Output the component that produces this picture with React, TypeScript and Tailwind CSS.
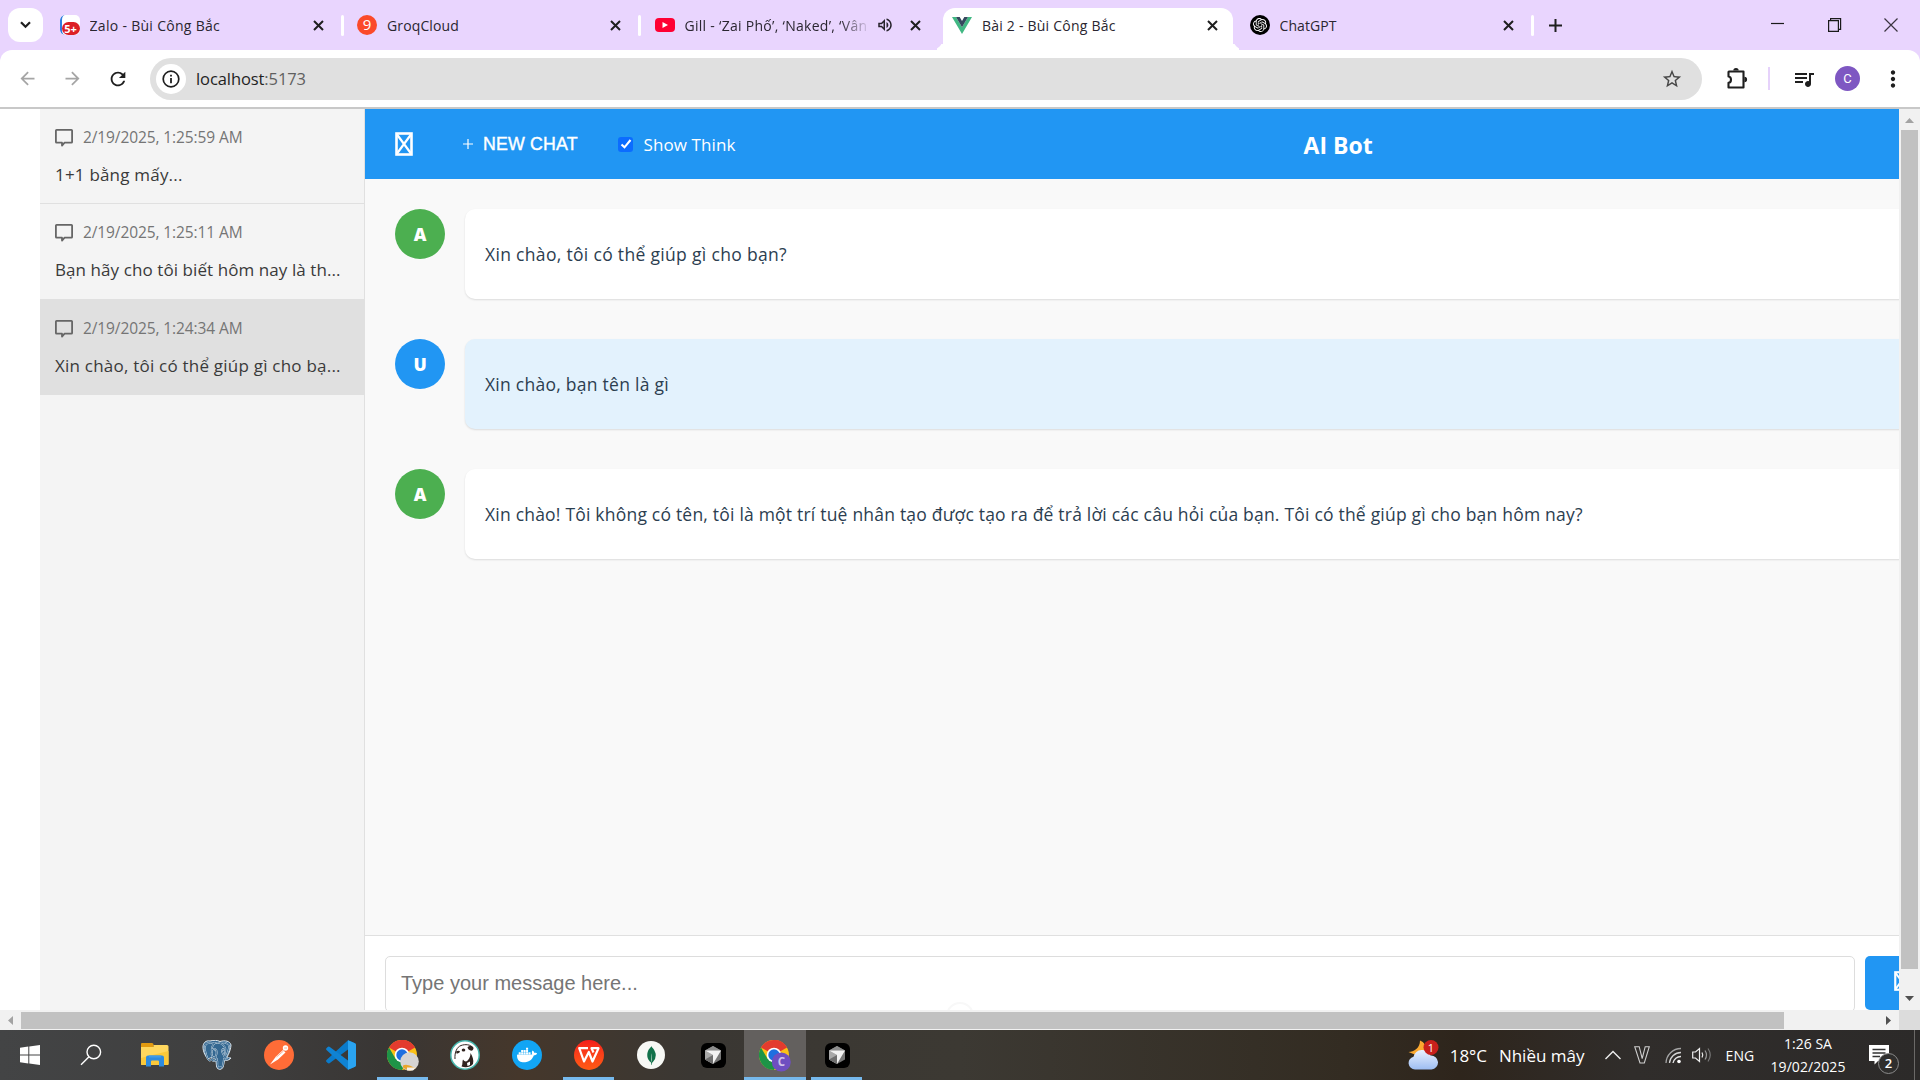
import type { ReactNode } from "react";
import {
  MdArrowBack,
  MdArrowForward,
  MdRefresh,
  MdStarBorder,
  MdQueueMusic,
  MdMoreVert,
  MdOutlineVolumeUp,
} from "react-icons/md";
import { SiOpenai, SiPostgresql, SiDocker, SiMongodb } from "react-icons/si";

/* ---------- Tab strip ---------- */

function ZaloFavicon() {
  return (
    <span className="relative block size-5 overflow-hidden rounded-[5px] bg-white">
      <span className="absolute inset-y-0 left-0 w-2.5 rounded-l-[5px] border-l-2 border-[#2f7de1]" />
      <span className="absolute right-0 bottom-0 flex h-[13px] w-[18px] items-center justify-center rounded-full bg-[#dc2026] text-[11px] leading-none font-bold text-white">
        5+
      </span>
    </span>
  );
}

function GroqFavicon() {
  return (
    <span className="flex size-5 items-center justify-center rounded-full bg-[#fb4a29] pb-px text-[15px] leading-none text-white">
      9
    </span>
  );
}

function YoutubeFavicon() {
  return (
    <span className="flex h-3.5 w-5 items-center justify-center rounded-[4px] bg-[#ff0033]">
      <svg viewBox="0 0 6 6" className="size-1.5">
        <path d="M0.5 0L6 3L0.5 6Z" fill="#fff" />
      </svg>
    </span>
  );
}

function VueFavicon() {
  return (
    <svg viewBox="0 0 20 17" className="h-[17px] w-5">
      <path d="M0 0H4L10 10.3L16 0H20L10 17Z" fill="#41b883" />
      <path d="M4 0H7.7L10 4L12.3 0H16L10 10.3Z" fill="#35495e" />
    </svg>
  );
}

function OpenAiFavicon() {
  return (
    <span className="flex size-5 items-center justify-center rounded-full bg-black">
      <SiOpenai className="size-3.5 text-white" />
    </span>
  );
}

function CloseIcon() {
  return (
    <svg viewBox="0 0 11 11" className="relative size-[11px] shrink-0" stroke="#1f1f1f" strokeWidth="2">
      <path d="M1 1L10 10M10 1L1 10" />
    </svg>
  );
}

type TabProps = {
  icon: ReactNode;
  title: ReactNode;
  active?: boolean;
  audio?: boolean;
  separator?: boolean;
};

function Tab({ icon, title, active, audio, separator }: TabProps) {
  return (
    <div className="relative flex h-[42px] w-[297.5px] shrink-0 items-center pb-[8px]">
      {active && (
        <div className="absolute inset-y-0 left-[4px] w-[290px] rounded-t-xl bg-white">
          <span className="absolute bottom-0 -left-3 size-3 rounded-br-xl bg-[#e9d5fe] shadow-[6px_6px_0_0_#fff]" />
          <span className="absolute -right-3 bottom-0 size-3 rounded-bl-xl bg-[#e9d5fe] shadow-[-6px_6px_0_0_#fff]" />
        </div>
      )}
      <span className="relative ml-[13.5px] flex w-5 justify-center">{icon}</span>
      <span
        className={
          audio
            ? "relative ml-2.5 w-[185px] overflow-hidden text-[14px] whitespace-nowrap text-[#2a2630] [mask-image:linear-gradient(to_right,#000_155px,transparent_186px)]"
            : "relative ml-2.5 w-[225px] overflow-hidden text-[14px] whitespace-nowrap text-[#2a2630]"
        }
      >
        {title}
      </span>
      {audio && <MdOutlineVolumeUp className="relative mr-[16px] ml-1.5 size-[18px] shrink-0 text-[#26222b]" />}
      <CloseIcon />
      {separator && <span className="ml-[17px] h-[21px] w-[3px] rounded-full bg-white" />}
    </div>
  );
}

function TabStrip() {
  return (
    <div className="flex h-[50px] shrink-0 bg-[#e9d5fe] pt-2">
      <div className="ml-2 flex h-[34px] w-[35px] shrink-0 items-center justify-center rounded-xl bg-white">
        <svg viewBox="0 0 11 8" className="h-2 w-[11px]" fill="none" stroke="#1f1f1f" strokeWidth="2.2">
          <path d="M1 1.2L5.5 5.8L10 1.2" />
        </svg>
      </div>
      <div className="ml-[3px] flex">
        <Tab icon={<ZaloFavicon />} title={<span className="tracking-[0.3px]">Zalo - Bùi Công Bắc</span>} separator />
        <Tab icon={<GroqFavicon />} title={<span className="tracking-[0.13px]">GroqCloud</span>} separator />
        <Tab
          icon={<YoutubeFavicon />}
          title={<span className="tracking-[0.28px]">Gill - ‘Zai Phố’, ‘Naked’, ‘Vân</span>}
          audio
        />
        <Tab icon={<VueFavicon />} title={<span className="tracking-[0.22px]">Bài 2 - Bùi Công Bắc</span>} active />
        <Tab icon={<OpenAiFavicon />} title={<span className="tracking-[0.07px]">ChatGPT</span>} separator />
      </div>
      <svg viewBox="0 0 13 13" className="mt-[10.5px] ml-[15.500px] size-[13px] shrink-0" stroke="#1f1f1f" strokeWidth="2">
        <path d="M6.500 0V13M0 6.500H13" />
      </svg>
      <div className="mt-[9px] ml-auto flex items-center gap-[42.500px] pr-[22px] pb-[18px]">
        <svg viewBox="0 0 14 14" className="size-3.5">
          <path d="M0 5.5H13" stroke="#1a1a1a" strokeWidth="1.2" />
        </svg>
        <svg viewBox="0 0 14 14" className="size-3.5" fill="none" stroke="#1a1a1a" strokeWidth="1.2">
          <path d="M0.6 2.6H10.4V13.4H0.6ZM2.6 2.6V0.6H12.6V11.4H10.4" />
        </svg>
        <svg viewBox="0 0 14 14" className="size-3.5" fill="none" stroke="#3a3440" strokeWidth="1.2">
          <path d="M0.5 0.5L13.5 13.5M13.5 0.5L0.5 13.5" />
        </svg>
      </div>
    </div>
  );
}

/* ---------- Toolbar ---------- */

function PuzzleIcon() {
  return (
    <svg viewBox="0 0 22 24" className="ml-[24px] h-6 w-[22px]">
      <path
        d="M3 4.500H17.500V20.500H2.500V15.800C5.800 15.500 5.800 9.800 2.500 9.500V5Z"
        fill="none"
        stroke="#1f1f1f"
        strokeWidth="2.100"
        strokeLinejoin="round"
      />
      <path d="M7.300 3.600A2.700 2.700 0 0 1 12.700 3.600ZM18.400 9.800A2.700 2.700 0 0 1 18.400 15.200Z" fill="#1f1f1f" />
    </svg>
  );
}

function Toolbar() {
  return (
    <div className="shrink-0 bg-[#e9d5fe]">
      <div className="flex h-[57px] items-center rounded-t-xl bg-white">
        <MdArrowBack className="ml-[17px] size-[21px] text-[#a5a5a5]" />
        <MdArrowForward className="ml-6 size-[21px] text-[#a5a5a5]" />
        <MdRefresh className="ml-6 size-[22px] text-[#1f1f1f]" />
        <div className="ml-[21px] flex h-[42px] w-[1552px] items-center rounded-full bg-[#e0e0e0] pl-1.5">
          <span className="flex size-[30px] items-center justify-center rounded-full bg-white">
            <svg viewBox="0 0 18 18" className="size-[18px]" fill="none" stroke="#1f1f1f">
              <circle cx="9" cy="9" r="7.8" strokeWidth="1.7" />
              <path d="M9 8V13.2M9 4.8V6.6" strokeWidth="1.8" />
            </svg>
          </span>
          <span className="mt-0.5 ml-[10px] text-[16.5px] tracking-[-0.09px] text-[#1f1f1f]">
            localhost<span className="text-[#5f5f5f]">:5173</span>
          </span>
          <MdStarBorder className="mr-[19px] ml-auto size-[22px] text-[#474747]" />
        </div>
        <PuzzleIcon />
        <span className="ml-[20px] h-[23px] w-[2px] bg-[#e6d2fb]" />
        <MdQueueMusic className="ml-[22px] size-6 text-[#1f1f1f]" />
        <span className="ml-[19px] flex size-[25px] items-center justify-center rounded-full bg-[#7e57c2] font-[Roboto] text-[13px] text-white">
          C
        </span>
        <MdMoreVert className="ml-[20px] size-[26px] text-[#1f1f1f]" />
      </div>
    </div>
  );
}

/* ---------- Chat application ---------- */

function MissingGlyph({ className }: { className: string }) {
  return (
    <svg viewBox="0 0 18 24" className={className} fill="none" stroke="#fff">
      <rect x="1.500" y="1.500" width="15" height="21" strokeWidth="2.600" />
      <path d="M2 2.500L16 21.500M16 2.500L2 21.500" strokeWidth="2.200" />
    </svg>
  );
}

function CommentIcon() {
  return (
    <svg viewBox="0 0 18 18" className="size-[18px]" fill="none" stroke="#666" strokeWidth="1.800" strokeLinejoin="round">
      <path d="M1.6 0.9H16.4Q17.1 0.9 17.1 1.6V13Q17.1 13.7 16.4 13.7H9.6L7 16.6V13.7H1.6Q0.9 13.7 0.9 13V1.6Q0.9 0.9 1.6 0.9Z" />
    </svg>
  );
}

type HistoryProps = { date: string; title: ReactNode; className: string };

function HistoryItem({ date, title, className }: HistoryProps) {
  return (
    <div className={className}>
      <div className="flex h-[22px] items-center">
        <CommentIcon />
        <span className="ml-2.5 text-[15.5px] tracking-[-0.1px] text-[#757575]">{date}</span>
      </div>
      <div className="mt-[12px] h-[28px] text-[17px] leading-[28px] whitespace-nowrap text-[#3a3a3a]">{title}</div>
    </div>
  );
}

function Sidebar() {
  return (
    <div className="ml-10 w-[325px] shrink-0 border-r border-[#e0e0e0] bg-[#f4f4f4]">
      <HistoryItem
        className="h-[95px] border-b border-[#e0e0e0] pt-[18px] pl-[15px]"
        date="2/19/2025, 1:25:59 AM"
        title={<span className="tracking-[0.2px]">1+1 bằng mấy...</span>}
      />
      <HistoryItem
        className="h-[95px] pt-[18px] pl-[15px]"
        date="2/19/2025, 1:25:11 AM"
        title={<span className="tracking-[0.08px]">Bạn hãy cho tôi biết hôm nay là th...</span>}
      />
      <HistoryItem
        className="h-[96px] bg-[#e0e0e0] pt-[19px] pl-[15px]"
        date="2/19/2025, 1:24:34 AM"
        title={<span className="tracking-[0.22px]">Xin chào, tôi có thể giúp gì cho bạ...</span>}
      />
    </div>
  );
}

type MessageProps = { user?: boolean; children: ReactNode };

function Message({ user, children }: MessageProps) {
  return (
    <div className="mb-10 flex gap-5">
      <span
        className={
          user
            ? "flex size-[50px] shrink-0 items-center justify-center rounded-full bg-[#2196f3] pt-px text-[17.5px] font-extrabold text-white"
            : "flex size-[50px] shrink-0 items-center justify-center rounded-full bg-[#4caf50] pt-px text-[17.5px] font-extrabold text-white"
        }
      >
        {user ? "U" : "A"}
      </span>
      <div
        className={
          user
            ? "flex h-[90px] flex-1 items-center rounded-[10px] bg-[#e3f2fd] px-5 text-[17.5px] whitespace-nowrap text-[#2c3e50] shadow-[0_1px_2px_rgba(0,0,0,0.12)]"
            : "flex h-[90px] flex-1 items-center rounded-[10px] bg-white px-5 text-[17.5px] whitespace-nowrap text-[#2c3e50] shadow-[0_1px_2px_rgba(0,0,0,0.12)]"
        }
      >
        {children}
      </div>
    </div>
  );
}

function ChatHeader() {
  return (
    <div className="flex h-[70px] shrink-0 items-center bg-[#2196f3] text-white">
      <MissingGlyph className="ml-[30px] h-6 w-[18px]" />
      <svg viewBox="0 0 10 10" className="ml-[50px] size-2.5">
        <path d="M5 0V10M0 5H10" stroke="#fff" strokeWidth="1.2" />
      </svg>
      <span className="ml-[10px] w-[97px] font-['Liberation_Sans'] text-[17.8px] tracking-[0.15px] whitespace-nowrap [-webkit-text-stroke:0.4px_#fff]">
        NEW CHAT
      </span>
      <span className="ml-[38px] flex size-[15px] items-center justify-center rounded-[3px] bg-[#0b6cff]">
        <svg viewBox="0 0 12 12" className="size-3" fill="none" stroke="#fff" strokeWidth="2.1">
          <path d="M1.5 6.5L4.5 9.3L10.5 2" />
        </svg>
      </span>
      <span className="mt-0.5 ml-[10.500px] text-[17px] tracking-[0.1px]">Show Think</span>
      <span className="mt-0.5 ml-[568px] text-[23px] font-bold">AI Bot</span>
    </div>
  );
}

function Composer() {
  return (
    <div className="flex h-[75px] shrink-0 border-t border-[#e0e0e0] bg-white pt-5 pl-5">
      <div className="h-[56px] w-[1470px] shrink-0 rounded-[5px] border border-[#ddd] pt-[12px] pl-[15px] font-['Liberation_Sans'] text-[20px] leading-7 text-[#757575]">
        Type your message here...
      </div>
      <div className="ml-2.5 flex h-[54px] w-[80px] shrink-0 items-center justify-start rounded-[5px] bg-[#2196f3] pl-[29px]">
        <MissingGlyph className="mb-1 h-5 w-[15px]" />
      </div>
    </div>
  );
}

function ChatApp() {
  return (
    <div className="relative flex min-w-0 flex-1 overflow-hidden bg-white">
      <Sidebar />
      <div className="flex w-[1600px] shrink-0 flex-col bg-[#f9f9f9]">
        <ChatHeader />
        <div className="flex-1 pt-[30px] pl-[30px]">
          <Message>
            <span className="tracking-[0.32px]">Xin chào, tôi có thể giúp gì cho bạn?</span>
          </Message>
          <Message user>
            <span className="tracking-[0.26px]">Xin chào, bạn tên là gì</span>
          </Message>
          <Message>
            <span className="tracking-[0.207px]">
              Xin chào! Tôi không có tên, tôi là một trí tuệ nhân tạo được tạo ra để trả lời các câu hỏi của bạn. Tôi có
              thể giúp gì cho bạn hôm nay?
            </span>
          </Message>
        </div>
        <Composer />
      </div>
      <span className="absolute -bottom-5 left-[946px] size-[28px] rounded-full border-2 border-[#f8f8f8]" />
    </div>
  );
}

/* ---------- Scrollbars ---------- */

function VerticalScrollbar() {
  return (
    <div className="flex w-[21px] shrink-0 flex-col items-center bg-[#f1f1f1]">
      <svg viewBox="0 0 9 5" className="mt-[9px] h-[5px] w-[9px]">
        <path d="M0 5L4.5 0L9 5Z" fill="#a3a3a3" />
      </svg>
      <div className="mt-[7px] h-[839px] w-[17px] bg-[#c1c1c1]" />
      <svg viewBox="0 0 9 5" className="mt-[27px] h-[5px] w-[9px]">
        <path d="M0 0L4.5 5L9 0Z" fill="#505050" />
      </svg>
    </div>
  );
}

function HorizontalScrollbar() {
  return (
    <div className="flex h-5 shrink-0 items-center bg-[#f1f1f1]">
      <svg viewBox="0 0 5 9" className="ml-2 h-[9px] w-[5px]">
        <path d="M5 0L0 4.5L5 9Z" fill="#a3a3a3" />
      </svg>
      <div className="mt-px ml-2 h-[17px] w-[1763px] bg-[#c1c1c1]" />
      <svg viewBox="0 0 5 9" className="ml-[102px] h-[9px] w-[5px]">
        <path d="M0 0L5 4.5L0 9Z" fill="#505050" />
      </svg>
      <div className="ml-auto h-5 w-[21px] bg-[#dcdcdc]" />
    </div>
  );
}

/* ---------- Taskbar ---------- */

function WindowsIcon() {
  return (
    <svg viewBox="0 0 20 20" className="size-5" fill="#fff">
      <path d="M0 2.8L8.3 1.6V9.4H0ZM9.3 1.5L20 0V9.4H9.3ZM0 10.4H8.3V18.4L0 17.2ZM9.3 10.4H20V20L9.3 18.5Z" />
    </svg>
  );
}

function SearchIcon() {
  return (
    <svg viewBox="0 0 22 22" className="mr-1 size-[22px]" fill="none" stroke="#fff" strokeWidth="1.4">
      <circle cx="13.8" cy="8" r="6.8" />
      <path d="M9 12.8L1 20.8" />
    </svg>
  );
}

function FolderIcon() {
  return (
    <svg viewBox="0 0 28 24" className="h-6 w-7">
      <path d="M0 1Q0 0 1 0H11Q12.5 0 12.5 1.5V6H0Z" fill="#e29a10" />
      <path d="M0 4H12.5V2H26Q27.5 2 27.5 3.5V21Q27.5 22 26.5 22H1Q0 22 0 21Z" fill="#ffd75e" />
      <path d="M0 15L27.5 8V21Q27.5 22 26.5 22H1Q0 22 0 21Z" fill="#fbc93a" />
      <path d="M5 14.5Q5 12.5 7 12.5H21Q23 12.5 23 14.5V23.5H18V18.5Q18 17.5 17 17.5H11Q10 17.5 10 18.5V23.5H5Z" fill="#2d8be0" />
      <path d="M8 12.5H20V14.5H8Z" fill="#3f9bea" />
    </svg>
  );
}

function PostgresIcon() {
  return (
    <span className="relative block size-[30px]">
      <svg viewBox="0 0 30 30" className="absolute inset-0 size-[30px]">
        <path
          d="M8 1C4 0 1 3 1 7C1 12 4 18 6.500 18.500C8 18.500 9 17 11 17.500C14 19 14 21 14.500 26C15 29 17 30 19.500 29C22 28 21.500 22 22.500 20C25 20.500 28 20 29 18C27 18 25.500 18 25 17C27 14 29 8 29 5C28 1 23 0 18 1.500C15 0 12 0 8 1Z"
          fill="#336791"
          stroke="#dfe8ef"
          strokeWidth="1"
        />
      </svg>
      <SiPostgresql className="absolute top-[2px] left-[2px] size-[26px] text-[#336791] [paint-order:stroke] [stroke-width:0.9] [stroke:#dfe8ef]" />
    </span>
  );
}

function PostmanIcon() {
  return (
    <svg viewBox="0 0 30 30" className="size-[30px]">
      <circle cx="15" cy="15" r="15" fill="#ff6c37" />
      <path d="M6 24.500L12 16.500L19 10L21.500 12.500L14 19.500Z" fill="#fff" />
      <path d="M12.500 17L19.500 11" stroke="#ff9a78" strokeWidth="0.8" />
      <circle cx="21.500" cy="8" r="2.700" fill="#fff" />
      <path d="M20.200 8H23" stroke="#ff9a78" strokeWidth="0.8" />
    </svg>
  );
}

function VsCodeIcon() {
  return (
    <svg viewBox="0 0 30 30" className="size-[30px]">
      <path d="M22 0.300L29 3.300Q30 3.800 30 5V10L22 9.500L3.500 23.200Q2.500 23.800 1.700 23L0.400 21.700Q-0.300 20.800 0.500 20Z" fill="#0a7bcb" />
      <path d="M22 29.700L29 26.700Q30 26.200 30 25V20L22 20.500L3.500 6.800Q2.500 6.200 1.700 7L0.400 8.300Q-0.300 9.200 0.500 10Z" fill="#0f83d4" />
      <path d="M22 0.300L29 3.300Q30 3.800 30 5V25Q30 26.200 29 26.700L22 29.700Z" fill="#2aa4f1" />
    </svg>
  );
}

function ChromeIcon({ badge }: { badge: ReactNode }) {
  return (
    <svg viewBox="0 0 32 32" className="mt-0.5 size-8">
      <circle cx="15" cy="15" r="15" fill="#fbc116" />
      <path d="M15 15L2 7.500A15 15 0 0 1 28 7.500Z" fill="#e33b2e" />
      <path d="M15 0A15 15 0 0 1 28 7.600H15Z" fill="#e33b2e" />
      <path d="M2 7.500A15 15 0 0 0 15 30L21.500 18.700L8.500 18.700Z" fill="#1e9447" />
      <circle cx="15" cy="15" r="7.300" fill="#fff" />
      <circle cx="15" cy="15" r="5.700" fill="#1f6fe0" />
      {badge}
    </svg>
  );
}

function BeaverIcon() {
  return (
    <svg viewBox="0 0 30 30" className="size-[30px]">
      <circle cx="15" cy="15" r="14.200" fill="#fff" stroke="#45b5ac" strokeWidth="1.500" />
      <path d="M5 19C4.500 12 7 7 11 5.500C15 4 21 4.500 22.500 7.500" fill="none" stroke="#30231f" strokeWidth="1" />
      <path d="M17.500 7.500C19 5.500 22.500 5.500 23.500 8C23.500 10 22 11 20.500 10.500C19 10 18 9 17.500 7.500Z" fill="#30231f" />
      <ellipse cx="13.500" cy="10" rx="1.800" ry="1.500" fill="#30231f" />
      <path d="M6 11.500C7.500 10.500 9.500 10.500 10 11.500C9.500 13 8 13.500 6.500 13.500Z" fill="#30231f" />
      <path d="M20.500 13C22.500 16 24 20 23 24C20 27.500 15.500 28 11.500 26.500C13 24 12 21.500 13 19.500C14.500 22 17 22 18 20C19.500 18.500 20.500 16 20.500 13Z" fill="#30231f" />
      <path d="M17 23L20 21.500V25L17.500 26Z" fill="#fff" />
    </svg>
  );
}

function WpsIcon() {
  return (
    <span className="flex size-[30px] items-center justify-center rounded-full bg-linear-to-b from-[#f51c1c] to-[#ff5a14]">
      <svg viewBox="0 0 22 16" className="h-4 w-[22px]" fill="none" stroke="#fff" strokeWidth="2.200" strokeLinejoin="round">
        <path d="M10 1.200H1.200L6 14.500L10.800 5L14.500 14.500L20.500 1.200H13.500L15.500 5.500" />
      </svg>
    </span>
  );
}

function CursorIcon() {
  return (
    <span className="flex size-[25px] items-center justify-center rounded-[6px] bg-black">
      <svg viewBox="0 0 16 18" className="h-[18px] w-4">
        <path d="M8 0L16 4.500V13.500L8 18L0 13.500V4.500Z" fill="#777" />
        <path d="M8 0L16 4.500H0Z" fill="#8d8d8d" />
        <path d="M0 4.500L8 9V18L0 13.500Z" fill="#a8a8a8" />
        <path d="M0 13.500L8 9V18Z" fill="#6d6d6d" />
        <path d="M0 4.500H16L8 18V9Z" fill="#f2f2f2" />
      </svg>
    </span>
  );
}

type TaskProps = { children: ReactNode; state?: "running" | "active" };

function Task({ children, state }: TaskProps) {
  return (
    <div
      className={
        state === "active"
          ? "relative flex h-full w-[62px] items-center justify-center bg-[#63605e]"
          : "relative flex h-full w-[62px] items-center justify-center"
      }
    >
      {children}
      {state === "running" && <span className="absolute bottom-0 left-[5px] h-[3px] w-[51px] bg-[#76b9ed]" />}
      {state === "active" && <span className="absolute bottom-0 left-0 h-[3px] w-full bg-[#76b9ed]" />}
    </div>
  );
}

function WeatherIcon() {
  return (
    <svg viewBox="0 0 31 30" className="h-[30px] w-[31px]">
      <defs>
        <linearGradient id="cloud" x1="0" y1="0" x2="0" y2="1">
          <stop offset="0" stopColor="#eaf2ff" />
          <stop offset="1" stopColor="#9dbdf2" />
        </linearGradient>
      </defs>
      <path d="M12 0.500C16 2 19 6 18 12L8 15L0.500 12C6 12 12 8 12 0.500Z" fill="#fba930" />
      <path d="M7 29.500A6.500 6.500 0 0 1 5.500 16.700A9 9 0 0 1 22.500 15.500A7 7 0 0 1 23.500 29.500Z" fill="url(#cloud)" />
      <circle cx="23" cy="7.500" r="7.500" fill="#c8201c" />
      <text x="23" y="11.500" textAnchor="middle" fontSize="11" fill="#fff">
        1
      </text>
    </svg>
  );
}

function Taskbar() {
  return (
    <div className="flex h-[50px] shrink-0 bg-[linear-gradient(to_right,#434445_0%,#3f3f3f_12%,#393634_20%,#45372b_27%,#3a3733_36%,#3c3933_50%,#332c22_70%,#2e251c_76%,#302d2b_85%,#2c2a29_100%)] text-white">
      <div className="flex h-full w-[60px] items-center justify-center">
        <WindowsIcon />
      </div>
      <div className="ml-0.5 flex h-full">
        <Task>
          <SearchIcon />
        </Task>
        <Task>
          <FolderIcon />
        </Task>
        <Task>
          <PostgresIcon />
        </Task>
        <Task>
          <PostmanIcon />
        </Task>
        <Task>
          <VsCodeIcon />
        </Task>
        <Task state="running">
          <ChromeIcon
            badge={
              <>
                <circle cx="22.500" cy="21.500" r="9.300" fill="#d6d4d3" />
                <path d="M16 25.500Q20 23.500 27 27.500L29 28Q23 33 16 27.500Z" fill="#eaa52a" />
                <path d="M20 27.500H29L26 30.500H20Z" fill="#f5efe8" />
              </>
            }
          />
        </Task>
        <Task>
          <BeaverIcon />
        </Task>
        <Task>
          <span className="flex size-[30px] items-center justify-center rounded-full bg-[#12a5f4]">
            <SiDocker className="size-5 text-white" />
          </span>
        </Task>
        <Task state="running">
          <WpsIcon />
        </Task>
        <Task>
          <span className="flex size-7 items-center justify-center rounded-full bg-[#f7f8f5]">
            <SiMongodb className="size-[19px] text-[#11714a]" />
          </span>
        </Task>
        <Task>
          <CursorIcon />
        </Task>
        <Task state="active">
          <ChromeIcon
            badge={
              <>
                <circle cx="22.300" cy="22" r="9.500" fill="#6f4fc0" />
                <text x="22.300" y="26" textAnchor="middle" fontSize="11.500" fontWeight="700" fill="#cfc3ea">
                  C
                </text>
              </>
            }
          />
        </Task>
        <Task state="running">
          <CursorIcon />
        </Task>
      </div>
      <div className="ml-auto flex items-center">
        <WeatherIcon />
        <span className="mt-0.5 ml-[11px] text-[17px] tracking-[-0.1px]">18°C</span>
        <span className="mt-0.5 ml-[12px] text-[17px]">Nhiều mây</span>
        <svg viewBox="0 0 16 10" className="ml-[20px] h-2.5 w-4" fill="none" stroke="#eee" strokeWidth="1.400">
          <path d="M0.500 9L8 1.500L15.500 9" />
        </svg>
        <svg viewBox="0 0 16 18" className="ml-[13px] h-[18px] w-4" fill="none" stroke="#cfcfcf" strokeWidth="1.100">
          <path d="M0.700 0.700H5.200L8.200 12.500L11.200 0.700H15.300L10.300 17H6Z" />
        </svg>
        <svg viewBox="0 0 17 17" className="ml-[15px] size-[17px]" fill="none" strokeWidth="1.300">
          <path d="M1 16A15 15 0 0 1 16 1.500" stroke="#a5a5a5" />
          <path d="M4.500 16A11.500 11.500 0 0 1 16 5.500" stroke="#d5d5d5" />
          <path d="M8 16A8 8 0 0 1 16 9.500" stroke="#e5e5e5" />
          <circle cx="14" cy="14.500" r="1.800" fill="#fff" />
        </svg>
        <svg viewBox="0 0 20 16" className="ml-[10px] h-4 w-5" fill="none" stroke="#eee" strokeWidth="1.200">
          <path d="M0.700 5H3.500L7.500 1.500V14.500L3.500 11H0.700Z" />
          <path d="M10 5.500Q11.500 8 10 10.500" />
          <path d="M13 3.500Q16 8 13 12.500" stroke="#9a9a9a" />
          <path d="M16 1.500Q20.500 8 16 14.500" stroke="#777" />
        </svg>
        <span className="ml-[14px] w-[29px] text-[14px] tracking-[0.1px]">ENG</span>
        <div className="ml-[15.500px] flex w-[76px] flex-col items-center text-[14px] leading-[23px]">
          <span>1:26 SA</span>
          <span className="tracking-[0.07px]">19/02/2025</span>
        </div>
        <div className="relative ml-[23px] h-[30px] w-[32px]">
          <svg viewBox="0 0 20 20" className="absolute top-[5px] left-0 size-5">
            <path d="M0 0H20V16H9L5.500 19.500V16H0Z" fill="#fff" />
            <path d="M3.500 4.500H16.500M3.500 8H16.500M3.500 11.500H11" stroke="#333" strokeWidth="1.300" />
          </svg>
          <span className="absolute top-[13px] left-[9px] flex size-[21px] items-center justify-center rounded-full border border-[#8b8b8b] bg-[#2f2e2d] text-[13px] leading-none font-semibold">
            2
          </span>
        </div>
        <span className="mr-[5px] ml-[13px] h-[50px] w-px bg-[#6b6967]" />
      </div>
    </div>
  );
}

export default function App() {
  return (
    <div className="flex h-[1080px] w-[1920px] flex-col overflow-hidden bg-white font-['Open_Sans','Noto_Sans',sans-serif]">
      <TabStrip />
      <Toolbar />
      <div className="h-0.5 shrink-0 bg-[#c8c8c8]" />
      <div className="flex h-[901px] shrink-0">
        <ChatApp />
        <VerticalScrollbar />
      </div>
      <HorizontalScrollbar />
      <Taskbar />
    </div>
  );
}
